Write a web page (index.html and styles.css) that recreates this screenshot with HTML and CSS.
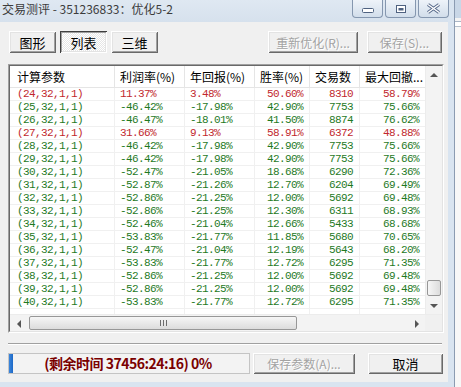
FILE: index.html
```html
<!DOCTYPE html>
<html lang="zh-CN">
<head>
  <meta charset="UTF-8" />
  <title>交易测评</title>
  <link rel="stylesheet" href="styles.css">
</head>
<body>
  <div class="window">
    <div class="titlebar">
      <span class="title">交易测评 - 351236833：优化5-2</span>
      <div class="controls">
        <div class="ctl">
          <svg width="14" height="8" viewBox="0 0 14 8"><rect x="1.5" y="3.5" width="11" height="4" rx="1" fill="#fff" stroke="#4f6280"/></svg>
        </div>
        <div class="ctl">
          <svg width="12" height="10" viewBox="0 0 12 10"><rect x="1.5" y="1.5" width="9" height="7" fill="#fff" stroke="#4f6280"/><rect x="3.5" y="4" width="5" height="2.5" fill="#4f6280"/></svg>
        </div>
        <div class="ctl">
          <svg width="15" height="11" viewBox="0 0 15 11"><path d="M2 1.5 L13 9.5 M13 1.5 L2 9.5" stroke="#56698a" stroke-width="3.4"/><path d="M2 1.5 L13 9.5 M13 1.5 L2 9.5" stroke="#fff" stroke-width="1.4"/></svg>
        </div>
      </div>
    </div>

    <div class="client">
      <div class="toolbar">
        <button class="btn tab">图形</button>
        <button class="btn tab pressed">列表</button>
        <button class="btn tab">三维</button>
        <button class="btn disabled wide">重新优化(R)...</button>
        <button class="btn disabled save">保存(S)...</button>
      </div>

      <div class="listbox">
        <div class="list-inner">
          <div class="list-main">
            <div class="list-body">
              <table class="grid">
                <colgroup>
                  <col style="width:105px"><col style="width:70px"><col style="width:70px">
                  <col style="width:55px"><col style="width:50px"><col style="width:66px">
                </colgroup>
                <thead>
                  <tr><th>计算参数</th><th>利润率(%)</th><th>年回报(%)</th><th>胜率(%)</th><th>交易数</th><th>最大回撤...</th></tr>
                </thead>
                <tbody id="rows"></tbody>
              </table>
            </div>
            <div class="vscroll">
              <div class="sb-btn"><span class="arr up"></span></div>
              <div class="sb-track v"><div class="thumb vthumb"></div></div>
              <div class="sb-btn"><span class="arr down"></span></div>
            </div>
          </div>
          <div class="hscroll">
            <div class="sb-btn"><span class="arr left"></span></div>
            <div class="sb-track h"><div class="thumb hthumb"><span class="grip"></span></div></div>
            <div class="sb-btn"><span class="arr right"></span></div>
            <div class="corner"></div>
          </div>
        </div>
      </div>

      <div class="separator"></div>

      <div class="footer">
        <div class="progress">
          <div class="chunk"></div>
          <span class="progress-text">(剩余时间 37456:24:16) 0%</span>
        </div>
        <button class="btn disabled keep">保存参数(A)...</button>
        <button class="btn cancel">取消</button>
      </div>
    </div>
  </div>
  <div class="side"></div>

  <script>
    // 参数, 利润率, 年回报, 胜率, 交易数, 最大回撤
    const results = [
      ["(24,32,1,1)", "11.37%", "3.48%", "50.60%", "8310", "58.79%"],
      ["(25,32,1,1)", "-46.42%", "-17.98%", "42.90%", "7753", "75.66%"],
      ["(26,32,1,1)", "-46.47%", "-18.01%", "41.50%", "8874", "76.62%"],
      ["(27,32,1,1)", "31.66%", "9.13%", "58.91%", "6372", "48.88%"],
      ["(28,32,1,1)", "-46.42%", "-17.98%", "42.90%", "7753", "75.66%"],
      ["(29,32,1,1)", "-46.42%", "-17.98%", "42.90%", "7753", "75.66%"],
      ["(30,32,1,1)", "-52.47%", "-21.05%", "18.68%", "6290", "72.36%"],
      ["(31,32,1,1)", "-52.87%", "-21.26%", "12.70%", "6204", "69.49%"],
      ["(32,32,1,1)", "-52.86%", "-21.25%", "12.00%", "5692", "69.48%"],
      ["(33,32,1,1)", "-52.86%", "-21.25%", "12.30%", "6311", "68.93%"],
      ["(34,32,1,1)", "-52.46%", "-21.04%", "12.66%", "5433", "68.68%"],
      ["(35,32,1,1)", "-53.83%", "-21.77%", "11.85%", "5680", "70.65%"],
      ["(36,32,1,1)", "-52.47%", "-21.04%", "12.19%", "5643", "68.20%"],
      ["(37,32,1,1)", "-53.83%", "-21.77%", "12.72%", "6295", "71.35%"],
      ["(38,32,1,1)", "-52.86%", "-21.25%", "12.00%", "5692", "69.48%"],
      ["(39,32,1,1)", "-52.86%", "-21.25%", "12.00%", "5692", "69.48%"],
      ["(40,32,1,1)", "-53.83%", "-21.77%", "12.72%", "6295", "71.35%"]
    ];

    const tbody = document.getElementById("rows");
    results.forEach(r => {
      const tr = document.createElement("tr");
      tr.className = r[1].startsWith("-") ? "loss" : "gain";
      tr.innerHTML = r.map((v, i) => `<td class="${i > 2 ? "num" : ""}">${v}</td>`).join("");
      tbody.appendChild(tr);
    });
    // empty space under the last row, gridlines keep going
    const filler = document.createElement("tr");
    filler.className = "filler";
    filler.innerHTML = "<td></td>".repeat(6);
    tbody.appendChild(filler);
  </script>
</body>
</html>
```

FILE: styles.css
```css
/* Page */
body {
  margin: 0;
  width: 461px;
  height: 387px;
  overflow: hidden;
  display: flex;
  font-family: "Noto Sans CJK SC", "Liberation Sans", sans-serif;
  font-size: 12px;
  background: #fff;
}

/* Window frame */
.window {
  width: 455px;
  height: 387px;
  box-sizing: border-box;
  padding: 0 6px 5px 0;
  display: flex;
  flex-direction: column;
  background: #d9e4f0;
  border-right: 1px solid #8b9bb1;
}

.titlebar {
  height: 22px;
  display: flex;
  justify-content: space-between;
  align-items: flex-start;
  background: linear-gradient(#dfe8f2, #d6e1ed);
}

.title {
  padding-left: 2px;
  line-height: 18px;
  color: #3c3c3c;
}

.controls {
  display: flex;
  gap: 2px;
  margin-right: -1px;
}

.ctl {
  width: 31px;
  height: 18px;
  box-sizing: border-box;
  border: 1px solid #8597af;
  border-top: none;
  border-radius: 0 0 4px 4px;
  background: linear-gradient(#eef3f9, #d2deeb);
  display: flex;
  align-items: center;
  justify-content: center;
}

/* Client area */
.client {
  flex: 1;
  background: #f0f0f0;
  padding: 9px 4px 0 8px;
  display: flex;
  flex-direction: column;
}

/* Buttons, classic 3d look */
.btn {
  height: 22px;
  padding: 0;
  border: none;
  background: #f0f0f0;
  font-family: "Noto Sans CJK SC", "Liberation Sans", sans-serif;
  font-size: 12px;
  color: #000;
  box-shadow: inset 1px 1px #fff, inset -1px -1px #696969,
              inset 2px 2px #e3e3e3, inset -2px -2px #a0a0a0;
}

.toolbar {
  display: flex;
  gap: 4px;
  padding-left: 1px;
}

.tab {
  width: 47px;
  font-size: 13px;
}

.tab.pressed {
  background-color: #fff;
  background-image: repeating-conic-gradient(#fff 0 25%, #e6e6e6 0 50%);
  background-size: 2px 2px;
  box-shadow: inset 1px 1px #404040, inset -1px -1px #fff,
              inset 2px 2px #a0a0a0, inset -2px -2px #e3e3e3;
  padding-top: 1px;
}

.disabled {
  color: #a3a3a3;
  text-shadow: 1px 1px #fff;
}

.wide {
  width: 90px;
  margin-left: auto;
}

.save {
  width: 75px;
  margin-left: 5px;
  margin-right: 2px;
}

/* List view */
.listbox {
  margin-top: 11px;
  height: 269px;
  box-sizing: border-box;
  border: 1px solid;
  border-color: #a0a0a0 #fff #fff #a0a0a0;
}

.list-inner {
  height: 100%;
  box-sizing: border-box;
  border: 1px solid;
  border-color: #696969 #e3e3e3 #e3e3e3 #696969;
  background: #fff;
  display: flex;
  flex-direction: column;
}

.list-main {
  display: flex;
  height: 248px;
}

.list-body {
  width: 416px;
  overflow: hidden;
}

.grid {
  table-layout: fixed;
  width: 416px;
  border-spacing: 0;
}

.grid th {
  height: 22px;
  box-sizing: border-box;
  padding: 0 0 0 5px;
  text-align: left;
  font-weight: normal;
  line-height: 20px;
  color: #000;
  white-space: nowrap;
  overflow: hidden;
  border-right: 1px solid #e5e5e5;
  border-bottom: 1px solid #e5e5e5;
  background: #fff;
}

.grid th:first-child,
.grid td:first-child {
  padding-left: 7px;
}

.grid td {
  height: 13px;
  box-sizing: border-box;
  padding: 0 0 0 5px;
  font-family: "Liberation Mono", monospace;
  font-size: 11px;
  letter-spacing: -0.6px;
  line-height: 12px;
  white-space: nowrap;
  overflow: hidden;
  border-right: 1px solid #f0f0f0;
  border-bottom: 1px solid #f0f0f0;
}

.grid td.num {
  text-align: right;
  padding: 0 6px 0 0;
}

.grid tr.filler td {
  height: 5px;
  border-bottom: none;
}

.gain td { color: #c1272d; }
.loss td { color: #1f7a1f; }

/* Scroll bars */
.vscroll {
  width: 17px;
  display: flex;
  flex-direction: column;
  background: #f3f3f3;
  border-left: 1px solid #ececec;
  box-sizing: border-box;
}

.sb-btn {
  width: 17px;
  height: 17px;
  flex: none;
  display: flex;
  align-items: center;
  justify-content: center;
}

.vscroll .sb-btn {
  width: 16px;
}

.sb-track {
  flex: 1;
  display: flex;
}

.sb-track.v {
  flex-direction: column;
  justify-content: flex-end;
  padding-bottom: 1px;
}

.thumb {
  box-sizing: border-box;
  border: 1px solid #979797;
  border-radius: 2px;
}

.vthumb {
  height: 16px;
  margin: 0 1px;
  background: linear-gradient(to right, #f6f6f6, #dcdcdc);
}

.hscroll {
  height: 17px;
  display: flex;
  background: #f3f3f3;
  border-top: 1px solid #ececec;
  box-sizing: border-box;
}

.sb-track.h {
  padding-left: 2px;
}

.hthumb {
  width: 268px;
  margin: 1px 0;
  background: linear-gradient(#f6f6f6, #dcdcdc);
  display: flex;
  align-items: center;
  justify-content: center;
}

.grip {
  width: 7px;
  height: 6px;
  background: repeating-linear-gradient(to right, #6e6e6e 0 1px, transparent 1px 3px);
}

.corner {
  width: 17px;
  background: #f0f0f0;
}

.arr {
  width: 0;
  height: 0;
  border: 4px solid transparent;
}

.arr.up { border-bottom: 4px solid #555; border-top-width: 0; }
.arr.down { border-top: 4px solid #555; border-bottom-width: 0; }
.arr.left { border-right: 4px solid #555; border-left-width: 0; }
.arr.right { border-left: 4px solid #555; border-right-width: 0; }

/* Bottom part */
.separator {
  margin: 10px 2px 0 0;
  border-top: 1px solid #a0a0a0;
  border-bottom: 1px solid #fff;
}

.footer {
  margin-top: 8px;
  height: 21px;
  display: flex;
}

.footer .btn {
  height: 21px;
}

.progress {
  width: 242px;
  box-sizing: border-box;
  border: 1px solid #c4c4c4;
  background: #f3f3f3;
  display: flex;
  align-items: center;
}

.chunk {
  width: 4px;
  align-self: stretch;
  background: linear-gradient(to right, #3b86dc, #1c68c6);
}

.progress-text {
  flex: 1;
  text-align: center;
  padding-right: 6px;
  font-size: 14px;
  font-weight: bold;
  letter-spacing: -0.5px;
  color: #7a0000;
  line-height: 19px;
}

.keep {
  width: 102px;
  margin-left: 3px;
}

.cancel {
  width: 75px;
  margin-left: 13px;
  font-size: 13px;
}

/* Bit of the window behind */
.side {
  flex: 1;
  background: linear-gradient(#c9d7e7 0 18px, #f4f4f4 18px 21px, #a9b6c6 21px 22px, #fff 22px 26px, #b4bfcc 26px 27px, #f7f7f7 27px);
}
```
